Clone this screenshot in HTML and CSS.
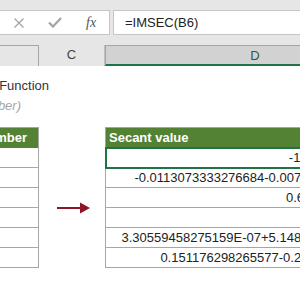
FILE: index.html
```html
<!DOCTYPE html>
<html lang="en">
<head>
    <meta charset="UTF-8">
    <title>IMSEC Function</title>
    <link rel="stylesheet" href="styles.css">
</head>
<body>
    <div class="app">
        <div class="toolbar">
            <div class="fxbox">
                <svg class="icon-x" width="12" height="10" viewBox="0 0 12 10">
                    <path d="M1.5 0.5 L10.5 9.5 M10.5 0.5 L1.5 9.5" stroke="#a3a3a3" stroke-width="1.3" fill="none"/>
                </svg>
                <svg class="icon-check" width="14" height="11" viewBox="0 0 14 11">
                    <path d="M1 5.5 L5 9.5 L13 1" stroke="#a3a3a3" stroke-width="2.2" fill="none"/>
                </svg>
                <span class="fx">fx</span>
            </div>
            <div class="formula">=IMSEC(B6)</div>
        </div>

        <div class="colheads">
            <div class="colhead col-b"></div>
            <div class="colhead col-c">C</div>
            <div class="colhead col-d">D</div>
        </div>

        <div class="title">
            <div class="line">IMSEC Function</div>
            <div class="line syntax">=IMSEC(inumber)</div>
        </div>

        <div class="grid">
            <div class="col-b">
                <div class="head"><span>Complex number</span></div>
                <div class="cell"></div>
                <div class="cell"></div>
                <div class="cell"></div>
                <div class="cell"></div>
                <div class="cell"></div>
                <div class="cell"></div>
            </div>
            <div class="col-c"></div>
            <div class="col-d">
                <div class="head">Secant value</div>
                <div class="cell selected">-1.0101086659009</div>
                <div class="cell">-0.0113073333276684-0.0076842956034512i</div>
                <div class="cell">0.64805427366389</div>
                <div class="cell"></div>
                <div class="cell">3.30559458275159E-07+5.1481096715381672i</div>
                <div class="cell">0.151176298265577-0.21546785940376i</div>
            </div>
        </div>

        <!-- arrow shape floating over the sheet -->
        <svg class="arrow" width="36" height="14" viewBox="0 0 36 14">
            <path d="M1 7 L26 7" stroke="#8e1428" stroke-width="2"/>
            <polygon points="24,1.5 34,7 24,12.5" fill="#8e1428"/>
        </svg>
    </div>
</body>
</html>
```

FILE: styles.css
```css
* {
    margin: 0;
    padding: 0;
    box-sizing: border-box;
}

body {
    font-family: 'Liberation Sans', Arial, sans-serif;
    font-size: 13px;
    color: #222;
    background: #fff;
}

.app {
    position: relative;
    width: 300px;
    height: 289px;
    overflow: hidden;
}

/* formula bar */
.toolbar {
    height: 45px;
    background: #e6e6e6;
    display: flex;
    align-items: flex-start;
    gap: 3px;
    padding-top: 10px;
    margin-left: -1px;
}

.fxbox {
    flex: none;
    width: 111px;
    height: 25px;
    background: #fff;
    border: 1px solid #c6c6c6;
    display: flex;
    align-items: center;
    padding-left: 13px;
}

.icon-check {
    margin-left: 23px;
}

.fx {
    margin-left: 24px;
    font-family: 'Liberation Serif', 'Times New Roman', serif;
    font-style: italic;
    font-size: 14px;
    color: #555;
}

.formula {
    flex: none;
    width: 220px;
    height: 25px;
    background: #fff;
    border: 1px solid #c6c6c6;
    padding-left: 11px;
    line-height: 23px;
    font-size: 13px;
    color: #222;
}

/* column headers */
.colheads {
    display: flex;
    height: 21px;
    background: #e6e6e6;
}

.colhead {
    flex: none;
    text-align: center;
    line-height: 19px;
    color: #444;
    border-right: 1px solid #c0c0c0;
}

.colheads .col-b {
    width: 39px;
}

.colheads .col-c {
    width: 66px;
}

.colheads .col-d {
    width: 300px;
    background: #d2d2d2;
    border-bottom: 2px solid #217346;
    color: #2b5b40;
}

/* sheet */
.title {
    width: 49px;
    margin-top: 10px;
}

.line {
    display: flex;
    justify-content: flex-end;
    white-space: nowrap;
    height: 19.5px;
    line-height: 19.5px;
    color: #333;
}

.syntax {
    padding-right: 28px;
    font-style: italic;
    color: #a6a6a6;
}

.grid {
    display: flex;
    margin-top: 12px;
}

.col-b {
    flex: none;
    width: 39px;
    border-top: 1px solid #a6a6a6;
    border-right: 1px solid #a6a6a6;
}

.col-c {
    flex: none;
    width: 66px;
}

.col-d {
    flex: none;
    width: 300px;
    border-top: 1px solid #a6a6a6;
    border-left: 1px solid #a6a6a6;
}

.head {
    height: 20px;
    line-height: 20px;
    background: #548235;
    color: #fff;
    font-weight: bold;
    white-space: nowrap;
    padding-left: 3px;
}

.col-b .head {
    display: flex;
    justify-content: flex-end;
    padding-right: 11px;
    overflow: hidden;
}

.cell {
    height: 20px;
    line-height: 19px;
    border-bottom: 1px solid #a6a6a6;
    text-align: right;
    white-space: nowrap;
    padding-right: 7px;
}

.cell.selected {
    outline: 2px solid #217346;
    outline-offset: -1px;
}

.arrow {
    position: absolute;
    left: 56px;
    top: 201px;
}
```
